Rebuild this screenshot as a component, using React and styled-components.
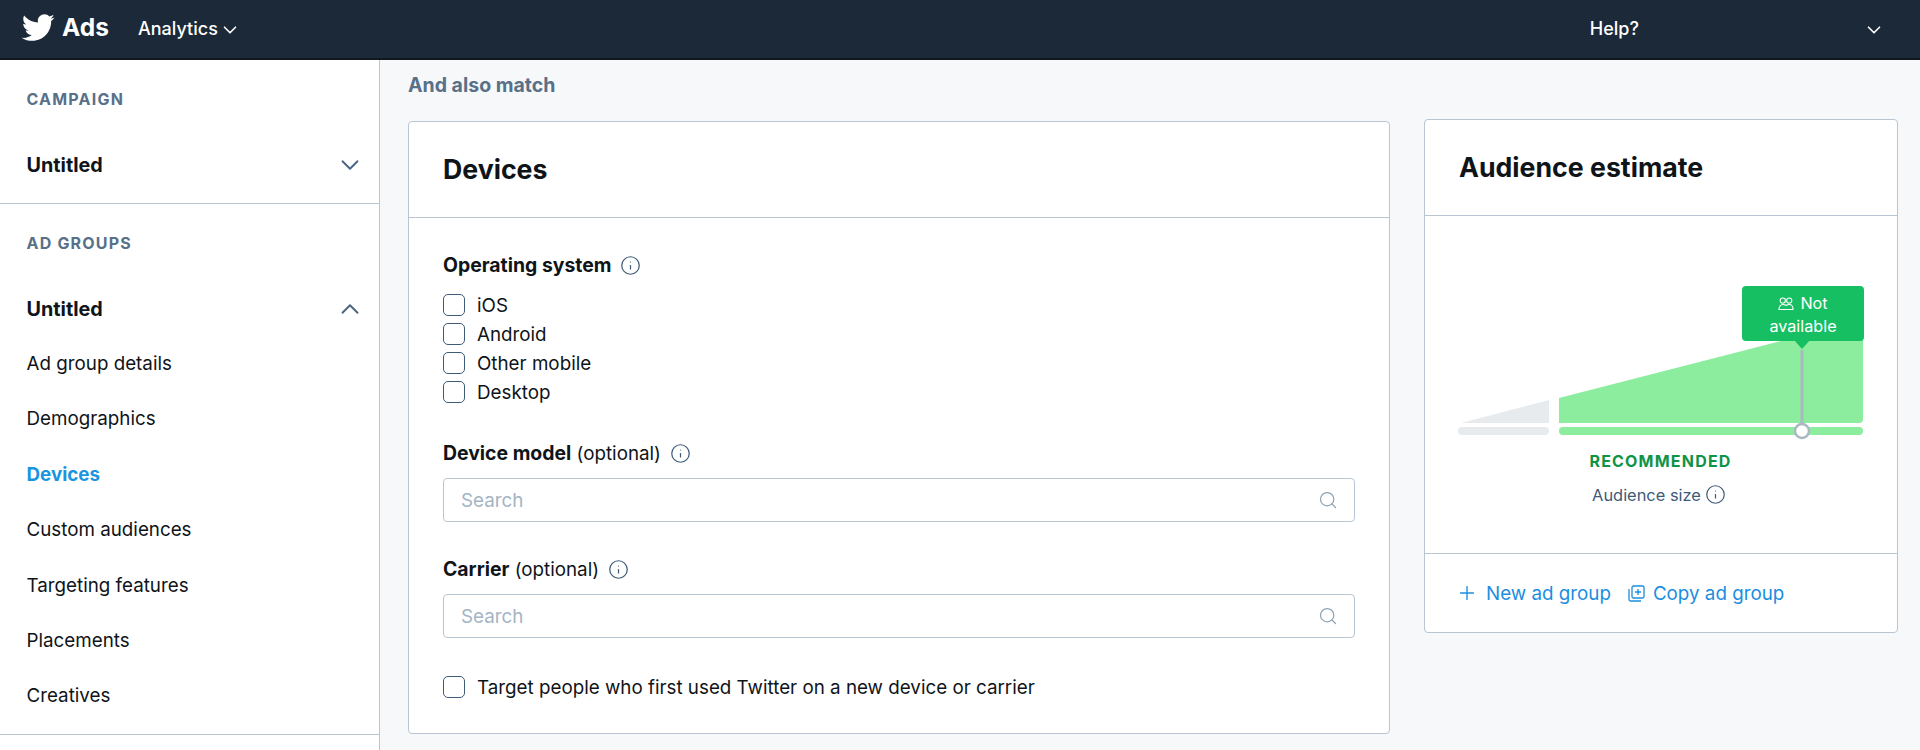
import React from "react";
import styled, { createGlobalStyle } from "styled-components";
import { ChevronDown, ChevronUp, Info, Search, Plus } from "lucide-react";

const Global = createGlobalStyle`
  html, body { margin: 0; padding: 0; height: 750px; overflow: hidden; background: #f6f8fa; }
  body { font-family: Inter, "Liberation Sans", sans-serif; color: #0f1419; }
  * { box-sizing: border-box; }
`;

const Page = styled.div`
  width: 1920px;
  height: 750px;
  display: flex;
  flex-direction: column;
  overflow: hidden;
`;
const TopBar = styled.header`
  height: 60px;
  flex: none;
  background: #1c2938;
  border-bottom: 1px solid #10171e;
  box-shadow: inset 0 -1px 0 #10171e;
  display: flex;
  align-items: center;
  color: #fff;
  padding: 0 35px 3px 22px;
`;
const Brand = styled.div`
  display: flex;
  align-items: center;
  gap: 7px;
  width: 116px;
  font-size: 24.5px;
  font-weight: 700;
  line-height: 1;
  span { position: relative; top: -1px; }
`;
const TopLink = styled.div`
  display: flex;
  align-items: center;
  gap: 1px;
  font-size: 18px;
  font-weight: 500;
  svg { position: relative; top: 2px; }
`;
const HelpLink = styled(TopLink)`
  margin-left: auto;
`;
const TopChevronSlot = styled.div`
  margin-left: 224px;
  display: flex;
  position: relative;
  top: 2px;
`;
const Body = styled.div`
  flex: 1;
  display: flex;
  min-height: 0;
`;
const Sidebar = styled.aside`
  width: 380px;
  flex: none;
  background: #fff;
  border-right: 1px solid #b8c6d4;
`;
const SideSection = styled.section`
  padding: 27px 27px 0 26.5px;
  border-bottom: 1px solid #b8c6d4;
  height: ${(p) => p.$h}px;
`;
const SideLabel = styled.div`
  height: 24px;
  line-height: 24px;
  font-size: 16px;
  font-weight: 700;
  letter-spacing: 1.2px;
  color: #587088;
`;
const SideHead = styled.div`
  display: flex;
  align-items: center;
  justify-content: space-between;
  height: 24px;
  line-height: 24px;
  margin-top: 42px;
  font-size: 19.8px;
  font-weight: 700;
  color: #0f1419;
  svg { margin-right: -13px; }
`;
const NavList = styled.nav`
  display: flex;
  flex-direction: column;
  margin-top: 15px;
`;
const NavItem = styled.a`
  height: 55.4px;
  line-height: 55.4px;
  font-size: 18.8px;
  font-weight: ${(p) => (p.$active ? 700 : 400)};
  color: ${(p) => (p.$active ? "#1b95e0" : "#0f1419")};
`;
const Main = styled.main`
  flex: 1;
  display: flex;
  gap: 34px;
  padding-left: 28px;
  padding-right: 22px;
  min-width: 0;
`;
const LeftCol = styled.div`
  width: 982px;
  flex: none;
  padding-top: 13px;
`;
const RightCol = styled.div`
  flex: 1;
  padding-top: 59px;
`;
const SectionTitle = styled.div`
  height: 24px;
  line-height: 24px;
  margin-top: 0;
  margin-bottom: 24px;
  font-size: 19.5px;
  font-weight: 700;
  color: #587088;
`;
const Card = styled.section`
  background: #fff;
  border: 1px solid #b8c6d4;
  border-radius: 4px;
`;
const CardHeader = styled.header`
  height: ${(p) => p.$h}px;
  padding-left: 34px;
  padding-bottom: 2px;
  display: flex;
  align-items: center;
  border-bottom: 1px solid #b8c6d4;
  font-size: 26.7px;
  font-weight: 700;
  color: #0f1419;
`;
const CardBody = styled.div`
  padding: 35px 34px 35px;
`;
const FieldLabel = styled.div`
  display: flex;
  align-items: center;
  gap: 9px;
  height: 24px;
  font-size: 18.8px;
  color: #0f1419;
  margin-top: ${(p) => p.$mt || 0}px;
  b { font-size: 19.4px; font-weight: 700; }
`;
const CheckList = styled.div`
  display: flex;
  flex-direction: column;
  gap: 7px;
  margin-top: 17px;
`;
const CheckRow = styled.label`
  display: flex;
  align-items: center;
  gap: 12px;
  height: 22px;
  font-size: 18.8px;
  color: #0f1419;
  margin-top: ${(p) => p.$mt || 0}px;
`;
const CheckBox = styled.input.attrs({ type: "checkbox" })`
  appearance: none;
  width: 22px;
  height: 22px;
  margin: 0;
  flex: none;
  background: #fff;
  border: 1.5px solid #3d5a78;
  border-radius: 5px;
`;
const InputWrap = styled.div`
  position: relative;
  margin-top: 13px;
  height: 44px;
  svg { position: absolute; right: 17px; top: 12px; }
`;
const SearchInput = styled.input`
  width: 100%;
  height: 100%;
  padding: 0 17px;
  border: 1.5px solid #b8c6d4;
  border-radius: 4px;
  background: #fff;
  outline: none;
  font: 400 18.8px Inter, "Liberation Sans", sans-serif;
  color: #0f1419;
  &::placeholder { color: #a3b4c4; opacity: 1; }
`;
const ChartBody = styled.div`
  position: relative;
  height: 338px;
  border-bottom: 1px solid #b8c6d4;
  padding: 70px 33px 0;
`;
const Chart = styled.svg`
  display: block;
`;
const Bubble = styled.div`
  position: absolute;
  left: 317px;
  top: 70px;
  width: 122px;
  height: 55px;
  background: #17bf63;
  border-radius: 4px;
  color: #fff;
  font-size: 16.2px;
  line-height: 22.5px;
  text-align: center;
  padding-top: 6px;
  svg { vertical-align: -2px; margin-right: 6px; }
`;
const Caption = styled.div`
  position: absolute;
  display: flex;
  align-items: center;
  justify-content: center;
  gap: 4px;
  line-height: 20px;
  white-space: nowrap;
`;
const Recommended = styled(Caption)`
  left: 162px;
  width: 147px;
  top: 235px;
  font-size: 16px;
  font-weight: 700;
  letter-spacing: 1.2px;
  color: #0e9347;
`;
const AudienceSize = styled(Caption)`
  left: 166px;
  width: 136px;
  top: 268px;
  font-size: 16.4px;
  color: #3d5a78;
`;
const CardFooter = styled.footer`
  height: 78px;
  padding: 0 0 0 31px;
  display: flex;
  align-items: center;
  gap: 17px;
`;
const FooterLink = styled.a`
  display: flex;
  align-items: center;
  gap: 8px;
  font-size: 18.8px;
  color: #1b8ee0;
`;

const Bird = () => (
  <svg width="33" height="28" viewBox="1 2.5 23 19.5" fill="#fff" aria-hidden="true">
    <path d="M23.643 4.937c-.835.37-1.732.62-2.675.72.962-.578 1.7-1.49 2.048-2.578-.9.534-1.897.922-2.958 1.13-.85-.904-2.06-1.47-3.4-1.47-2.572 0-4.658 2.086-4.658 4.66 0 .364.042.718.12 1.06-3.873-.195-7.304-2.05-9.602-4.868-.4.69-.63 1.49-.63 2.342 0 1.616.823 3.043 2.072 3.878-.764-.025-1.482-.234-2.11-.583v.06c0 2.257 1.605 4.14 3.737 4.568-.392.106-.803.162-1.227.162-.3 0-.593-.028-.877-.082.593 1.85 2.313 3.198 4.352 3.234-1.595 1.25-3.604 1.995-5.786 1.995-.376 0-.747-.022-1.112-.065 2.062 1.323 4.51 2.093 7.14 2.093 8.57 0 13.255-7.098 13.255-13.254 0-.2-.005-.402-.014-.602.91-.658 1.7-1.477 2.323-2.41z" />
  </svg>
);
const Tip = () => <Info size={21} color="#3d5a78" strokeWidth={1.4} />;
const People = () => (
  <svg width="16" height="14" viewBox="0 0 16 14" fill="none" stroke="#fff" strokeWidth="1.1">
    <circle cx="4.8" cy="3.6" r="2.6" />
    <circle cx="11.2" cy="3.6" r="2.6" />
    <path d="M1 12.5c0-3 1.7-5 3.8-5s3.2 1 3.2 1 1.1-1 3.2-1 3.8 2 3.8 5z" />
  </svg>
);
const CopyIcon = () => (
  <svg width="17" height="17" viewBox="0 0 17 17" fill="none" stroke="#1b8ee0" strokeWidth="1.3">
    <rect x="4" y="1" width="12" height="12" rx="1.5" />
    <path d="M1 4v10.5c0 .8.7 1.5 1.5 1.5H13" />
    <path d="M10 4v6M7 7h6" />
  </svg>
);

const Field = ({ name, mt }) => (
  <>
    <FieldLabel $mt={mt}>
      <span><b>{name}</b> (optional)</span>
      <Tip />
    </FieldLabel>
    <InputWrap>
      <SearchInput placeholder="Search" />
      <Search size={20} color="#8fa3b5" strokeWidth={1.5} />
    </InputWrap>
  </>
);

const NAV = ["Ad group details", "Demographics", "Devices", "Custom audiences", "Targeting features", "Placements", "Creatives"];
const OS = ["iOS", "Android", "Other mobile", "Desktop"];

export default function App() {
  return (
    <Page>
      <Global />
      <TopBar>
        <Brand><Bird /><span>Ads</span></Brand>
        <TopLink>Analytics <ChevronDown size={22} strokeWidth={1.8} /></TopLink>
        <HelpLink>Help?</HelpLink>
        <TopChevronSlot><ChevronDown size={22} strokeWidth={1.8} /></TopChevronSlot>
      </TopBar>
      <Body>
        <Sidebar>
          <SideSection $h={144}>
            <SideLabel>CAMPAIGN</SideLabel>
            <SideHead>Untitled <ChevronDown size={30} color="#4a6580" strokeWidth={1.5} /></SideHead>
          </SideSection>
          <SideSection $h={531}>
            <SideLabel>AD GROUPS</SideLabel>
            <SideHead>Untitled <ChevronUp size={30} color="#4a6580" strokeWidth={1.5} /></SideHead>
            <NavList>
              {NAV.map((n) => <NavItem key={n} $active={n === "Devices"}>{n}</NavItem>)}
            </NavList>
          </SideSection>
        </Sidebar>
        <Main>
          <LeftCol>
            <SectionTitle>And also match</SectionTitle>
            <Card>
              <CardHeader $h={96}>Devices</CardHeader>
              <CardBody>
                <FieldLabel><b>Operating system</b><Tip /></FieldLabel>
                <CheckList>
                  {OS.map((o) => <CheckRow key={o}><CheckBox />{o}</CheckRow>)}
                </CheckList>
                <Field name="Device model" mt={38} />
                <Field name="Carrier" mt={35} />
                <CheckRow $mt={38}><CheckBox />Target people who first used Twitter on a new device or carrier</CheckRow>
              </CardBody>
            </Card>
          </LeftCol>
          <RightCol>
            <Card>
              <CardHeader $h={96}>Audience estimate</CardHeader>
              <ChartBody>
                <Chart width="406" height="160" viewBox="0 0 406 160">
                  <path d="M3 137 L91 114 V137 Z" fill="#e8ebee" />
                  <rect x="0" y="141" width="91" height="8" rx="4" fill="#e8ebee" />
                  <path d="M101 112 L405 34 V133 a4 4 0 0 1 -4 4 H101 Z" fill="#8ced9f" />
                  <rect x="101" y="141" width="304" height="8" rx="4" fill="#8ced9f" />
                  <path d="M344 64 V146" stroke="#aab8c2" strokeWidth="3" />
                  <circle cx="344" cy="145" r="7" fill="#fff" stroke="#aab8c2" strokeWidth="2.5" />
                  <path d="M336 54 H352 L344 63 Z" fill="#17bf63" />
                </Chart>
                <Bubble><People />Not<br />available</Bubble>
                <Recommended>RECOMMENDED</Recommended>
                <AudienceSize>Audience size <Tip /></AudienceSize>
              </ChartBody>
              <CardFooter>
                <FooterLink><Plus size={22} strokeWidth={1.5} color="#1b8ee0" />New ad group</FooterLink>
                <FooterLink><CopyIcon />Copy ad group</FooterLink>
              </CardFooter>
            </Card>
          </RightCol>
        </Main>
      </Body>
    </Page>
  );
}
